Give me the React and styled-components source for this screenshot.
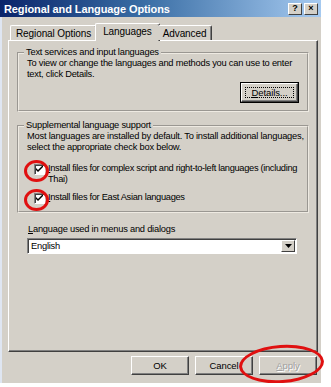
import React from 'react';
import styled, { createGlobalStyle } from 'styled-components';

const GlobalStyle = createGlobalStyle`
  body {
    margin: 0;
    background: #ffffff;
    font-family: "Liberation Sans", Arial, sans-serif;
    font-size: 9.3px;
    letter-spacing: -0.22px;
    color: #000;
  }
`;

const face = '#d4d0c8';

const Window = styled.div`
  position: relative;
  width: 321px;
  height: 383px;
  box-sizing: border-box;
  background: ${face};
  border-left: 2px solid #dfe6f2;
  display: flex;
  flex-direction: column;
  white-space: nowrap;
`;

const TitleBar = styled.div`
  height: 17px;
  margin-left: -2px;
  padding: 0 3px 0 4px;
  display: flex;
  align-items: center;
  background: linear-gradient(to right, #0a246a 0%, #3a6ea5 45%, #a6caf0 100%);
  color: #fff;
  font-weight: bold;
  font-size: 11px;
  letter-spacing: -0.1px;
`;

const TitleText = styled.span`
  flex: 1;
`;

const CaptionButton = styled.button`
  width: 14px;
  height: 12px;
  margin-left: 2px;
  padding: 0;
  box-sizing: border-box;
  background: ${face};
  border: 1px solid;
  border-color: #fff #404040 #404040 #fff;
  font-family: "Liberation Sans", Arial, sans-serif;
  font-weight: bold;
  font-size: 9px;
  line-height: 9px;
  color: #000;
`;

const Body = styled.div`
  flex: 1;
  display: flex;
  flex-direction: column;
  padding: 0 3px 0 6px;
`;

const TabRow = styled.div`
  height: 23px;
  display: flex;
  align-items: flex-end;
  padding-left: 2px;
  position: relative;
  z-index: 1;
  font-size: 10px;
  letter-spacing: -0.1px;
`;

const Tab = styled.div`
  height: ${p => (p.$active ? '18px' : '15px')};
  margin: ${p => (p.$active ? '0 -2px -1px -2px' : '0')};
  padding: 0 ${p => (p.$active ? '7px' : '5px')};
  padding-bottom: ${p => (p.$active ? '2px' : '0')};
  display: flex;
  align-items: center;
  box-sizing: border-box;
  background: ${face};
  border-top: 1px solid #fff;
  border-left: ${p => (p.$first || p.$active ? '1px solid #fff' : 'none')};
  border-right: 1px solid #404040;
  box-shadow: inset -1px 0 #808080;
  border-radius: 2px 2px 0 0;
`;

const Panel = styled.div`
  height: 312px;
  box-sizing: border-box;
  border: 1px solid;
  border-color: #fff #404040 #404040 #fff;
  box-shadow: inset -1px -1px #808080;
  padding: 6px 8px 0 8px;
  display: flex;
  flex-direction: column;
`;

const Group = styled.fieldset`
  margin: ${p => p.$top}px 0 0 0;
  padding: 0 9px ${p => p.$bottom}px 8px;
  border: 2px groove #eeeae2;
  min-width: 0;
`;

const Legend = styled.legend`
  padding: 0 2px;
  margin-left: -3px;
  line-height: 11px;
`;

const Para = styled.p`
  margin: 0;
  line-height: 11px;
`;

const ButtonRight = styled.div`
  display: flex;
  justify-content: flex-end;
  margin-top: 3px;
`;

const PushButton = styled.button`
  width: ${p => p.$w || 58}px;
  height: 19px;
  padding: 0;
  box-sizing: border-box;
  background: ${face};
  border: 1px solid;
  border-color: #fff #404040 #404040 #fff;
  box-shadow: inset -1px -1px #808080;
  font-family: "Liberation Sans", Arial, sans-serif;
  font-size: 9.5px;
  letter-spacing: -0.1px;
  color: ${p => (p.disabled ? '#a0a0a0' : '#000')};
  text-shadow: ${p => (p.disabled ? '1px 1px #fff' : 'none')};
  position: relative;
`;

const DefaultButton = styled(PushButton)`
  outline: 1px solid #000;
  outline-offset: 0;

  &::after {
    content: '';
    position: absolute;
    inset: 3px;
    border: 1px dotted #000;
  }
`;

const CheckRow = styled.label`
  display: flex;
  align-items: flex-start;
  gap: 3px;
  margin-top: ${p => p.$top}px;
  line-height: 11px;
  letter-spacing: -0.32px;
`;

const CheckWrap = styled.span`
  position: relative;
  flex: none;
  width: 11px;
  height: 11px;
  margin: 1px 0 0 7px;
`;

const CheckBox = styled.span`
  display: block;
  width: 11px;
  height: 11px;
  box-sizing: border-box;
  background: #fff;
  border: 1px solid;
  border-color: #808080 #fff #fff #808080;
  box-shadow: inset 1px 1px #404040;
  svg {
    display: block;
    margin: 1px 0 0 1px;
  }
`;

const Ring = styled.span`
  position: absolute;
  left: -10px;
  top: -4px;
  width: 25px;
  height: 22px;
  border: 3px solid #e01010;
  border-radius: 50%;
  box-sizing: border-box;
`;

const FieldLabel = styled.div`
  margin: 11px 0 0 11px;
  line-height: 11px;
`;

const Select = styled.div`
  margin: 3px 0 0 10px;
  width: 270px;
  height: 16px;
  box-sizing: border-box;
  background: #fff;
  border: 1px solid;
  border-color: #808080 #fff #fff #808080;
  box-shadow: inset 1px 1px #404040;
  display: flex;
  align-items: center;
  padding-left: 3px;
`;

const SelectValue = styled.span`
  flex: 1;
`;

const DropButton = styled.span`
  width: 14px;
  height: 12px;
  margin-right: 1px;
  box-sizing: border-box;
  background: ${face};
  border: 1px solid;
  border-color: #fff #404040 #404040 #fff;
  display: flex;
  align-items: center;
  justify-content: center;
`;

const Footer = styled.div`
  position: relative;
  display: flex;
  justify-content: flex-end;
  gap: 6px;
  padding: 4px 1px 0 0;
`;

const ApplyRing = styled.span`
  position: absolute;
  right: -6px;
  top: -7px;
  width: 85px;
  height: 38px;
  border: 3px solid #e01010;
  border-radius: 50%;
  box-sizing: border-box;
  transform: rotate(-4deg);
  pointer-events: none;
`;

function Check() {
  return (
    <CheckWrap>
      <CheckBox>
        <svg width="7" height="7" viewBox="0 0 7 7">
          <path d="M0 2 L0 4 L2 6 L7 1 L7 -1 L2 4 Z" fill="#000" />
        </svg>
      </CheckBox>
      <Ring />
    </CheckWrap>
  );
}

function App() {
  return (
    <>
      <GlobalStyle />
      <Window>
        <TitleBar>
          <TitleText>Regional and Language Options</TitleText>
          <CaptionButton>?</CaptionButton>
          <CaptionButton>×</CaptionButton>
        </TitleBar>
        <Body>
          <TabRow>
            <Tab $first>Regional Options</Tab>
            <Tab $active>Languages</Tab>
            <Tab>Advanced</Tab>
          </TabRow>
          <Panel>
            <Group $top={0} $bottom={8}>
              <Legend>Text services and input languages</Legend>
              <Para>
                To view or change the languages and methods you can use to enter
                <br />
                text, click Details.
              </Para>
              <ButtonRight>
                <DefaultButton $w={57}><u>D</u>etails...</DefaultButton>
              </ButtonRight>
            </Group>
            <Group $top={8} $bottom={7}>
              <Legend>Supplemental language support</Legend>
              <Para>
                Most languages are installed by default. To install additional languages,
                <br />
                select the appropriate check box below.
              </Para>
              <CheckRow $top={10}>
                <Check />
                <span>
                  <u>I</u>nstall files for complex script and right-to-left languages (including
                  <br />
                  Thai)
                </span>
              </CheckRow>
              <CheckRow $top={7}>
                <Check />
                <span><u>I</u>nstall files for East Asian languages</span>
              </CheckRow>
            </Group>
            <FieldLabel><u>L</u>anguage used in menus and dialogs</FieldLabel>
            <Select>
              <SelectValue>English</SelectValue>
              <DropButton>
                <svg width="7" height="4" viewBox="0 0 7 4">
                  <path d="M0 0 H7 L3.5 4 Z" fill="#000" />
                </svg>
              </DropButton>
            </Select>
          </Panel>
          <Footer>
            <PushButton>OK</PushButton>
            <PushButton>Cancel</PushButton>
            <PushButton disabled><u>A</u>pply</PushButton>
            <ApplyRing />
          </Footer>
        </Body>
      </Window>
    </>
  );
}

export default App;
